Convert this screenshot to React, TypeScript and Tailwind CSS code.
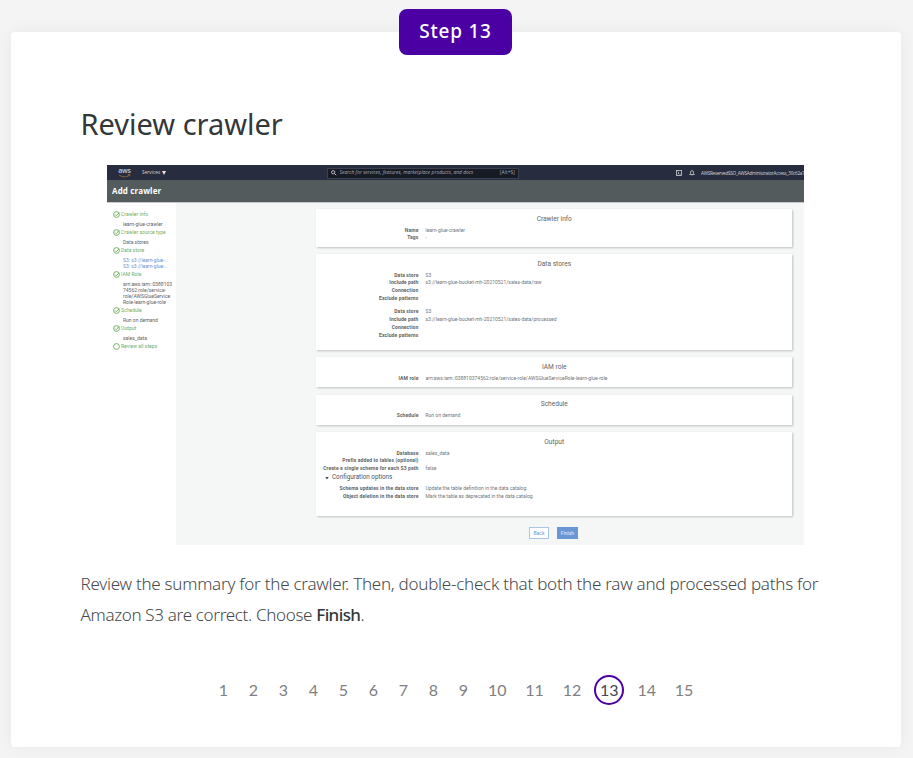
import React from "react";

type Field = { label: string; value?: string };

function AwsLogo() {
  return (
    <div className="flex h-[10px] w-[13px] flex-col items-center">
      <span className="h-[6px] font-['Open_Sans',sans-serif] text-[7px] leading-[6px] font-semibold tracking-[-0.2px] text-[#c5c8ce]">aws</span>
      <svg viewBox="0 0 13 4" className="h-[4px] w-[13px]" fill="none" stroke="#a1713a" strokeWidth="0.8">
        <path d="M1 0.8C4 3.4 8.5 3.4 11.3 1.2M9.8 0.7L12 0.6L11.5 2.4" />
      </svg>
    </div>
  );
}

function TopBar() {
  return (
    <div className="flex h-[15px] items-center overflow-hidden bg-[#272d3e] font-['Open_Sans',sans-serif] whitespace-nowrap text-[#d5d7db]">
      <div className="w-[35px] shrink-0 pl-[11px]">
        <AwsLogo />
      </div>
      <div className="flex w-[185px] shrink-0 items-center gap-[2px] pt-px text-[4.8px]">
        Services
        <svg viewBox="0 0 4 4" className="size-[4px]" fill="#e5e7eb">
          <path d="M0 0H4L2 4Z" />
        </svg>
      </div>
      <div className="mt-px flex h-[11px] w-[192px] shrink-0 items-center border border-[#3b4150] bg-[#171b25] px-[3px] text-[4.8px] text-[#a9adb5]">
        <svg viewBox="0 0 6 6" className="mr-[3px] size-[5.5px] shrink-0" fill="none" stroke="#d5d7db" strokeWidth="0.9">
          <circle cx="2.4" cy="2.4" r="1.8" />
          <path d="M3.8 3.8L5.7 5.7" />
        </svg>
        <span className="grow tracking-[0.07px] italic">Search for services, features, marketplace products, and docs</span>
        <span className="tracking-[0.1px]">[Alt+S]</span>
      </div>
      <svg viewBox="0 0 7 7" className="mt-px ml-[157px] size-[6px] shrink-0" fill="none" stroke="#d5d7db" strokeWidth="0.9">
        <rect x="0.5" y="0.5" width="6" height="6" />
        <path d="M2 2L3.5 3.5L2 5M4 5H5.3" />
      </svg>
      <svg viewBox="0 0 7 7" className="mt-px ml-[7px] size-[6px] shrink-0" fill="none" stroke="#d5d7db" strokeWidth="0.9">
        <path d="M0.7 5.2L1.8 4V2.5A1.7 1.7 0 0 1 5.2 2.5V4L6.3 5.2ZM2.8 5.6A0.8 0.8 0 0 0 4.2 5.6" />
      </svg>
      <span className="ml-[6px] pt-px text-[4.6px] tracking-[-0.22px]">AWSReservedSSO_AWSAdministratorAccess_30c62a7</span>
    </div>
  );
}

function StepHead({ text, open }: { text: string; open?: boolean }) {
  return (
    <div className="flex h-[9px] items-center text-[5px] text-[#71ad62]">
      <svg viewBox="0 0 7 7" className="mr-[1px] size-[7px] shrink-0" fill="none" stroke="#67a956" strokeWidth="0.9">
        <circle cx="3.5" cy="3.5" r="2.9" />
        {!open && <path d="M2 3.5L3.2 4.7L6 1.8" />}
      </svg>
      <span className="pt-px tracking-[0.04px]">{text}</span>
    </div>
  );
}

function StepBody({ lines, link }: { lines: string[]; link?: boolean }) {
  return (
    <div className={`py-[1.5px] pl-[10px] text-[5px] ${link ? "text-[#6d93cb]" : "text-[#5f6364]"}`}>
      {lines.map((line, i) => (
        <div key={i} className="h-[6px] leading-[6px]">{line}</div>
      ))}
    </div>
  );
}

function Sidebar() {
  return (
    <div className="w-[69.4px] shrink-0 bg-white pt-[7px] pl-[6px] whitespace-nowrap">
      <StepHead text="Crawler info" />
      <StepBody lines={["learn-glue-crawler"]} />
      <StepHead text="Crawler source type" />
      <StepBody lines={["Data stores"]} />
      <StepHead text="Data store" />
      <StepBody link lines={["S3: s3://learn-glue-...", "S3: s3://learn-glue-..."]} />
      <StepHead text="IAM Role" />
      <StepBody lines={["arn:aws:iam::0388103", "74562:role/service-", "role/AWSGlueService", "Role-learn-glue-role"]} />
      <StepHead text="Schedule" />
      <StepBody lines={["Run on demand"]} />
      <StepHead text="Output" />
      <StepBody lines={["sales_data"]} />
      <StepHead text="Review all steps" open />
    </div>
  );
}

function Fields({ rows }: { rows: Field[] }) {
  return (
    <div>
      {rows.map((row, i) => (
        <div key={i} className="flex h-[7.8px] items-center text-[5px]">
          <span className="mr-[7px] w-[102.5px] shrink-0 text-right font-bold tracking-[0.12px] text-[#606466]">{row.label}</span>
          <span className="text-[#727678]">{row.value}</span>
        </div>
      ))}
    </div>
  );
}

function Panel({ title, className, children }: { title: string; className: string; children: React.ReactNode }) {
  return (
    <section className={`w-[476.5px] bg-white whitespace-nowrap shadow-[0.5px_1px_2px_rgba(0,0,0,0.22)] ${className}`}>
      <h3 className="pt-[5.5px] text-center text-[6.6px] leading-[8px] text-[#606567]">{title}</h3>
      {children}
    </section>
  );
}

function Console() {
  return (
    <div className="ml-[96px] h-[380px] w-[697px] overflow-hidden bg-[#f5f7f7] font-[Roboto,sans-serif]">
      <TopBar />
      <div className="flex h-[23px] items-center border-b border-[#c5c9ca] bg-[#545b5d] pl-[5px] font-['Open_Sans',sans-serif] text-[8px] font-bold tracking-[0.12px] text-white">
        Add crawler
      </div>
      <div className="flex h-[342px]">
        <Sidebar />
        <div className="pt-[6px] pl-[139.6px]">
          <Panel title="Crawler info" className="mb-[7px] h-[38px]">
            <div className="pt-[4px]">
              <Fields rows={[{ label: "Name", value: "learn-glue-crawler" }, { label: "Tags", value: "-" }]} />
            </div>
          </Panel>
          <Panel title="Data stores" className="mb-[7px] h-[96px]">
            <div className="flex flex-col gap-[5.5px] pt-[4px]">
              <Fields rows={[{ label: "Data store", value: "S3" }, { label: "Include path", value: "s3://learn-glue-bucket-mh-20210521/sales-data/raw" }, { label: "Connection" }, { label: "Exclude patterns" }]} />
              <Fields rows={[{ label: "Data store", value: "S3" }, { label: "Include path", value: "s3://learn-glue-bucket-mh-20210521/sales-data/processed" }, { label: "Connection" }, { label: "Exclude patterns" }]} />
            </div>
          </Panel>
          <Panel title="IAM role" className="mb-[7.5px] h-[30px]">
            <div className="pt-[4px]">
              <Fields rows={[{ label: "IAM role", value: "arn:aws:iam::038810374562:role/service-role/AWSGlueServiceRole-learn-glue-role" }]} />
            </div>
          </Panel>
          <Panel title="Schedule" className="mb-[7.5px] h-[30px]">
            <div className="pt-[4px]">
              <Fields rows={[{ label: "Schedule", value: "Run on demand" }]} />
            </div>
          </Panel>
          <Panel title="Output" className="h-[84px]">
            <div className="pt-[4px]">
              <Fields rows={[{ label: "Database", value: "sales_data" }, { label: "Prefix added to tables (optional)" }, { label: "Create a single schema for each S3 path", value: "false" }]} />
            </div>
            <div className="flex h-[12px] items-center pb-[2px] pl-[9px] text-[6.3px] text-[#4f5456]">
              <svg viewBox="0 0 4 3" className="mr-[3px] h-[2.5px] w-[4px]" fill="#444">
                <path d="M0 0H4L2 3Z" />
              </svg>
              Configuration options
            </div>
            <Fields rows={[{ label: "Schema updates in the data store", value: "Update the table definition in the data catalog." }, { label: "Object deletion in the data store", value: "Mark the table as deprecated in the data catalog." }]} />
          </Panel>
          <div className="mt-[10.5px] ml-[213px] flex gap-[8px] text-[5px]">
            <div className="flex h-[12px] w-[20px] items-center justify-center border border-[#a9c5e8] bg-white pt-[1.5px] text-[#6a98d4]">Back</div>
            <div className="flex h-[12px] w-[21px] items-center justify-center bg-[#6897d4] pt-[1.5px] text-[#e6effa]">Finish</div>
          </div>
        </div>
      </div>
    </div>
  );
}

const pages = Array.from({ length: 15 }, (_, i) => i + 1);

export default function App() {
  return (
    <div className="h-[758px] w-full overflow-hidden bg-[#f4f4f4] pt-[32px] pl-[11px]">
      <main className="relative h-[715px] w-[890px] rounded-[4px] bg-white pt-[72px] shadow-[0_0_16px_rgba(0,0,0,0.05)]">
        <div className="absolute -top-[23px] left-[388px] flex h-[46px] w-[113px] items-center justify-center rounded-[8px] bg-[#4b00a4] pb-[2px] font-['Noto_Sans',sans-serif] text-[19px] font-medium tracking-[0.75px] whitespace-nowrap text-white">
          Step 13
        </div>
        <h1 className="h-[61px] pl-[69.5px] font-['Noto_Sans',sans-serif] text-[29px] leading-[40px] whitespace-nowrap text-[#333739]">
          Review crawler
        </h1>
        <Console />
        <p className="mt-[23px] ml-[69.5px] font-['Noto_Sans',sans-serif] text-[17px] leading-[31px] font-light tracking-[-0.25px] whitespace-nowrap text-[#45494b]">
          Review the summary for the crawler. Then, double-check that both the raw and processed paths for
          <br />
          <span className="tracking-[-0.32px]">Amazon S3 are correct. Choose </span>
          <span className="font-medium tracking-[-0.6px] text-[#333739]">Finish</span>.
        </p>
        <nav className="mt-[45px] flex h-[30px] items-center pl-[197.5px] font-[Lato,sans-serif] text-[16px] text-[#808082]">
          {pages.map((page) => (
            <span
              key={page}
              className={`flex h-[30px] items-center justify-center ${page < 10 ? "w-[30px]" : page === 13 ? "mx-[3.7px] w-[30px] rounded-full border-2 border-[#4b00a4] text-[#45494b]" : "w-[37.4px]"}`}
            >
              {page}
            </span>
          ))}
        </nav>
      </main>
    </div>
  );
}
